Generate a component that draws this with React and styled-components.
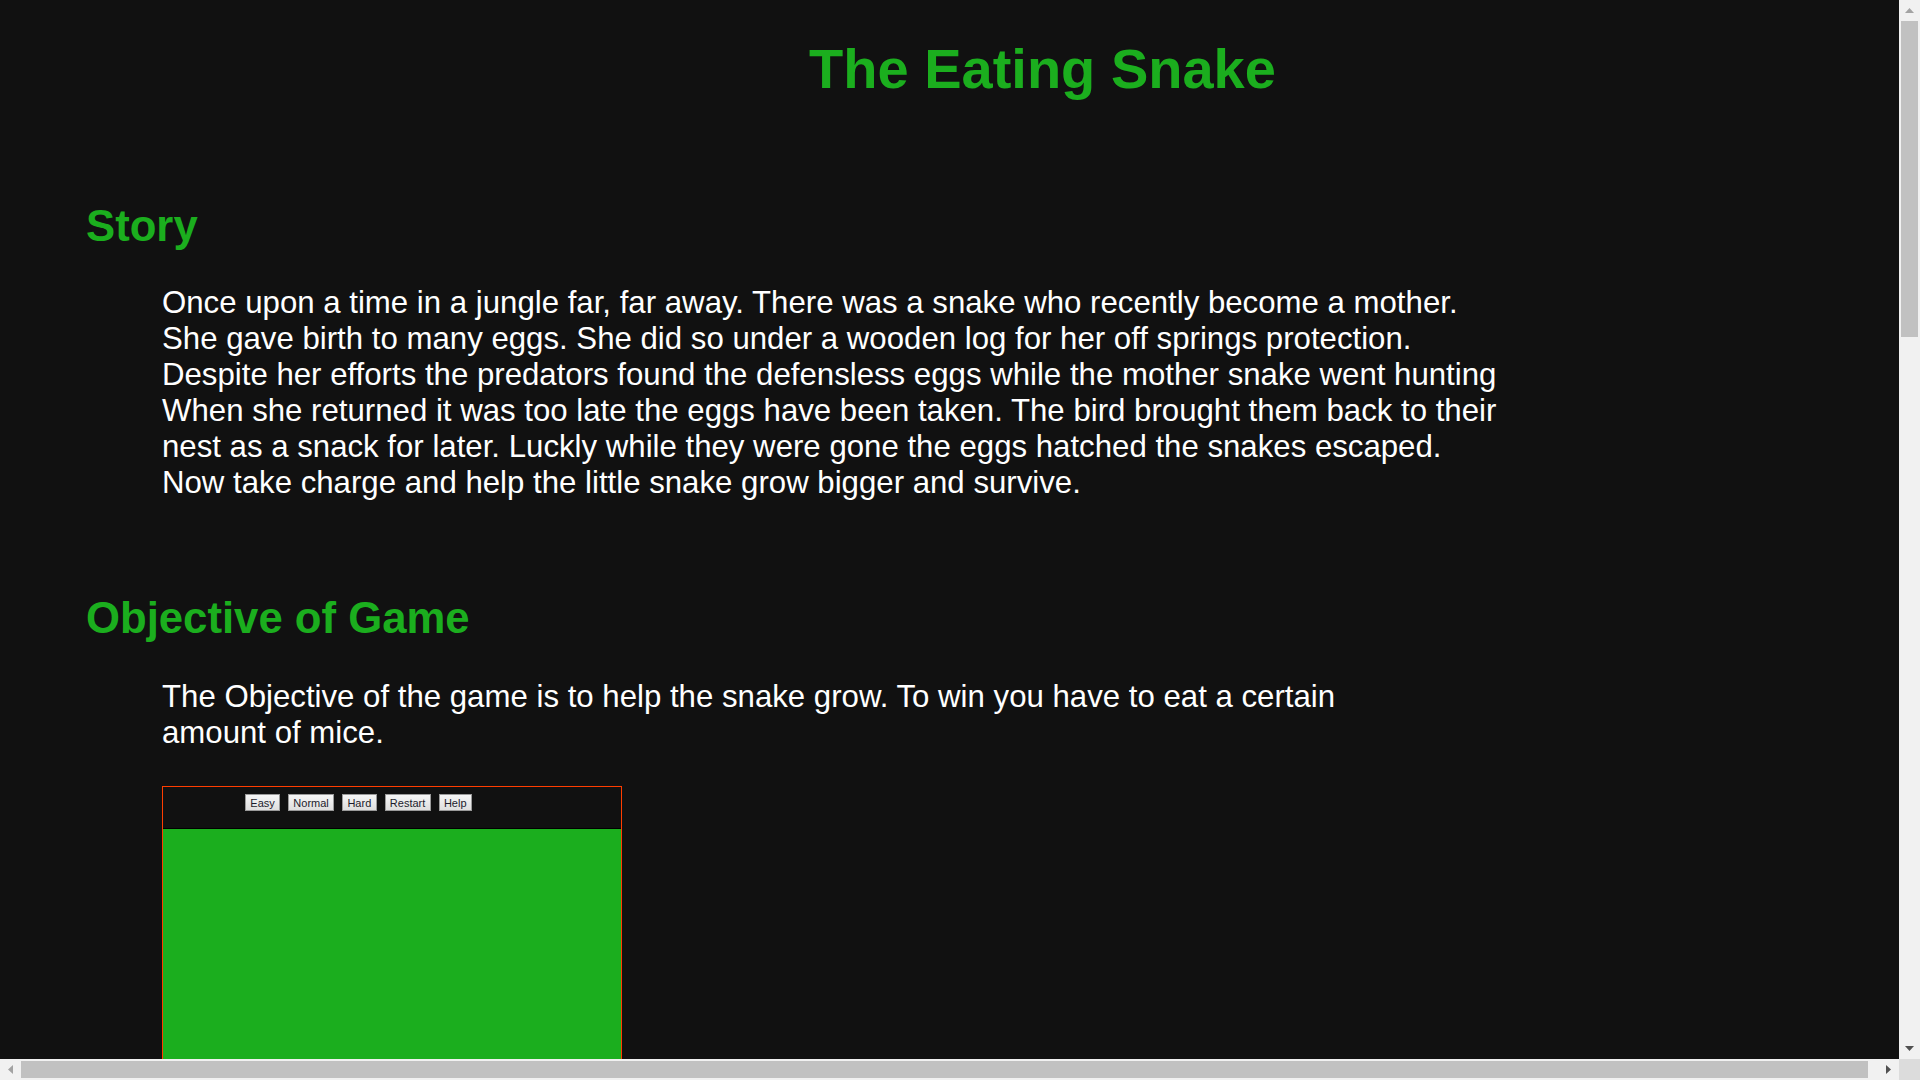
import styled, { createGlobalStyle } from 'styled-components';

const GlobalStyle = createGlobalStyle`
    body {
        margin: 8px;
        background: #111111;
        font-family: "Liberation Sans", Arial, sans-serif;
    }
`

const Page = styled.div`
    width: 1893px;
    min-height: 3392px;
    color: #ffffff;
`

const Title = styled.h1`
    margin: 28px 0 0 0;
    padding-left: 176px;
    text-align: center;
    font-size: 56px;
    font-weight: bold;
    color: #1bae1e;
`

const Heading = styled.h2`
    margin: ${props => props.first ? '100px' : '92px'} 0 0 78px;
    font-size: 43.7px;
    font-weight: bold;
    color: #1bae1e;
`

const Text = styled.p`
    margin: ${props => props.narrow ? '36px' : '34px'} 0 0 154px;
    width: ${props => props.narrow ? '1220px' : 'auto'};
    font-size: 31.2px;
    line-height: 36px;
`

const GameBox = styled.div`
    margin: 35px 0 0 154px;
    width: 458px;
    border: 1px solid #ff3d00;
    border-bottom: none;
`

const Toolbar = styled.div`
    display: flex;
    gap: 8px;
    height: 42px;
    padding: 7px 0 0 82px;
    box-sizing: border-box;
    background: #111111;
    border-bottom: 1px solid #000000;
`

const Button = styled.button`
    height: 17px;
    padding: 0 4.3px;
    font-family: "Liberation Sans", Arial, sans-serif;
    font-size: 11px;
    color: #1c1c2c;
    background: linear-gradient(#f6f6f6, #dedede);
    border: 1px solid #9a9a9a;
    border-radius: 0;
`

const Field = styled.div`
    height: 480px;
    background: #1bae1e;
`

// browser scrollbars drawn over the page
const VScroll = styled.div`
    position: fixed;
    top: 0;
    right: 0;
    width: 21px;
    height: calc(100vh - 21px);
    background: #f1f1f1;
    display: flex;
    flex-direction: column;
`

const HScroll = styled.div`
    position: fixed;
    left: 0;
    bottom: 0;
    width: calc(100vw - 21px);
    height: 21px;
    background: #f1f1f1;
    display: flex;
`

const Corner = styled.div`
    position: fixed;
    right: 0;
    bottom: 0;
    width: 21px;
    height: 21px;
    background: #dcdcdc;
`

const ArrowButton = styled.div`
    flex: none;
    width: 21px;
    height: 21px;
    display: flex;
    align-items: center;
    justify-content: center;
`

const Track = styled.div`
    flex: 1;
    display: flex;
    flex-direction: ${props => props.vertical ? 'column' : 'row'};
    padding: ${props => props.vertical ? '0 2px' : '2px 0'};
`

const Thumb = styled.div`
    flex: none;
    background: #c1c1c1;
`

const Arrow = ({ dir, color }) => {
    const points = {
        up: '0,5 4.5,0 9,5',
        down: '0,0 9,0 4.5,5',
        left: '5,0 5,9 0,4.5',
        right: '0,0 0,9 5,4.5',
    }[dir];
    const vertical = dir === 'up' || dir === 'down';
    return (
        <svg width={vertical ? 9 : 5} height={vertical ? 5 : 9} viewBox={vertical ? '0 0 9 5' : '0 0 5 9'}>
            <polygon points={points} fill={color} />
        </svg>
    )
}

const story = [
    'Once upon a time in a jungle far, far away. There was a snake who recently become a mother.',
    'She gave birth to many eggs. She did so under a wooden log for her off springs protection.',
    'Despite her efforts the predators found the defensless eggs while the mother snake went hunting',
    'When she returned it was too late the eggs have been taken. The bird brought them back to their',
    'nest as a snack for later. Luckly while they were gone the eggs hatched the snakes escaped.',
    'Now take charge and help the little snake grow bigger and survive.',
]

const App = () => {
    return (
        <Page>
            <GlobalStyle />
            <Title>The Eating Snake</Title>
            <Heading first>Story</Heading>
            <Text>
                {story.map((line, i) => (
                    <span key={i}>{line}{i < story.length - 1 && <br />}</span>
                ))}
            </Text>
            <Heading>Objective of Game</Heading>
            <Text narrow>
                The Objective of the game is to help the snake grow. To win you have to eat a certain amount of mice.
            </Text>
            <GameBox>
                <Toolbar>
                    {['Easy', 'Normal', 'Hard', 'Restart', 'Help'].map(label => (
                        <Button key={label}>{label}</Button>
                    ))}
                </Toolbar>
                <Field />
            </GameBox>

            <VScroll>
                <ArrowButton><Arrow dir="up" color="#a3a3a3" /></ArrowButton>
                <Track vertical>
                    <Thumb style={{ height: 316 }} />
                </Track>
                <ArrowButton><Arrow dir="down" color="#505050" /></ArrowButton>
            </VScroll>
            <HScroll>
                <ArrowButton><Arrow dir="left" color="#a3a3a3" /></ArrowButton>
                <Track>
                    <Thumb style={{ width: 1847 }} />
                </Track>
                <ArrowButton><Arrow dir="right" color="#505050" /></ArrowButton>
            </HScroll>
            <Corner />
        </Page>
    )
}

export default App;
